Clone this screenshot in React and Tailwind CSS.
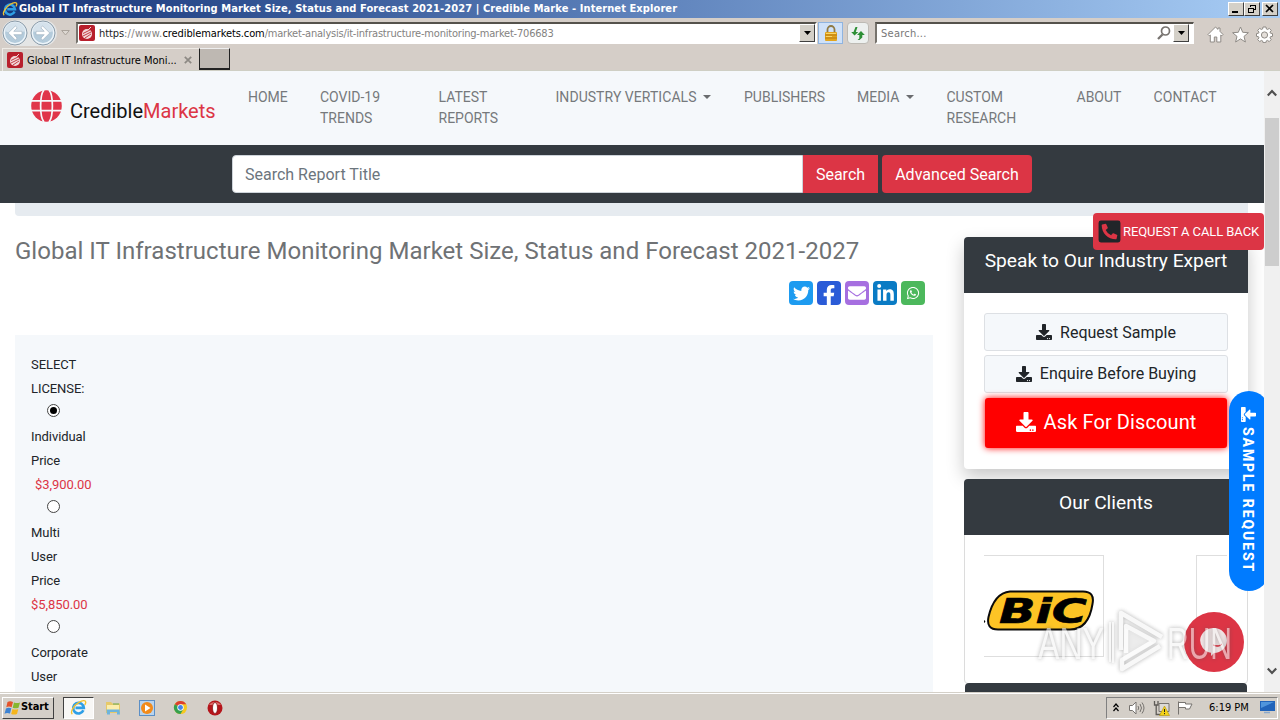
import React from 'react';
import {
  FaDownload,
  FaPhoneSquareAlt,
  FaTwitter,
  FaFacebookF,
  FaEnvelope,
  FaLinkedinIn,
  FaWhatsapp,
} from 'react-icons/fa';

const tahoma = "font-['DejaVu_Sans_Condensed','DejaVu_Sans',sans-serif]";

function IeLogo({ className }) {
  return (
    <svg viewBox="0 0 16 16" className={className} fill="none">
      <path d="M12.6 10.6A5 5 0 1 1 13 8.3H5.2" stroke="#2f9fe6" strokeWidth="2.5" />
      <path d="M2.2 14.2C-.2 12.4 3.6 6 8.4 3.2c3.4-2 6.2-2.2 6.4-.4.1.8-.3 1.8-.9 2.7" stroke="#f2c230" strokeWidth="1.3" />
    </svg>
  );
}

function Favicon() {
  return (
    <svg viewBox="0 0 16 16" className="size-4 shrink-0">
      <rect width="16" height="16" rx="2" fill="#b81f2c" />
      <circle cx="8" cy="9" r="5" fill="#f3d9da" />
      <path d="M4 8.5 11 5M4 11l8-4M6 13l6-4" stroke="#c23a44" strokeWidth="1" />
      <path d="m9 5 3-3" stroke="#f3d9da" />
    </svg>
  );
}

function GlobeMark() {
  return (
    <svg viewBox="0 0 31 32" className="h-8 w-[31px]" fill="none">
      <ellipse cx="15.500" cy="16" rx="15.300" ry="15.800" fill="#e0354a" />
      <g stroke="#f5f8fb" strokeWidth="1.700">
        <path d="M0 10.800h31M0 20.600h31" />
        <path d="M13 0C8.500 5 8.500 27 13 32M18 0c4.500 5 4.500 27 0 32" />
      </g>
    </svg>
  );
}

function RoundArrow({ flip }) {
  return (
    <svg viewBox="0 0 26 26" className={flip ? 'size-[26px] -scale-x-100' : 'size-[26px]'}>
      <circle cx="13" cy="13" r="12" fill="#b4cbdb" stroke="#8c9ba8" />
      <circle cx="13" cy="13" r="10.6" fill="none" stroke="#eef5fa" strokeWidth="1.3" />
      <path d="M3 11a10 9 0 0 1 20 0q-10 5-20 0Z" fill="#d5e2ec" />
      <path d="M20 11.3h-8.2l3.4-3.5-1.9-1.8L6.2 13l7.1 7 1.9-1.8-3.4-3.5H20Z" fill="#fff" stroke="#a3b5c3" strokeWidth=".7" />
    </svg>
  );
}

function DropButton({ className }) {
  return (
    <div className={`flex items-center justify-center border border-r-[#404040] border-b-[#404040] border-t-white border-l-white bg-[#d4d0c8] ${className}`}>
      <svg viewBox="0 0 7 4" className="h-1 w-[7px]"><path d="M0 0h7L3.5 4Z" fill="#000" /></svg>
    </div>
  );
}

function WindowButton({ children }) {
  return (
    <div className="flex h-[14px] w-4 items-center justify-center border border-t-white border-l-white border-r-[#404040] border-b-[#404040] bg-[#d4d0c8]">
      <svg viewBox="0 0 12 10" className="h-[10px] w-3" fill="none" stroke="#000" shapeRendering="crispEdges">{children}</svg>
    </div>
  );
}

function TitleBar() {
  return (
    <div className="flex h-[18px] shrink-0 items-center bg-linear-to-r from-[#173479] via-[#5e82bb] to-[#a8cdf5] pl-[2px] pr-[2px]">
      <IeLogo className="size-4" />
      <div className={`ml-[1px] w-[1000px] whitespace-nowrap pt-px text-[11px] font-bold tracking-[0.088px] text-white ${tahoma}`}>
        Global IT Infrastructure Monitoring Market Size, Status and Forecast 2021-2027 | Credible Marke - Internet Explorer
      </div>
      <div className="ml-auto flex">
        <WindowButton><path d="M2 8h6" strokeWidth="2" /></WindowButton>
        <WindowButton>
          <path d="M4.5 3V1.5h5v4H8M4 1h6" />
          <path d="M2.5 4v4.5h5V4.500h-5M2 4h6" />
        </WindowButton>
        <div className="ml-[2px]">
          <WindowButton><path d="m2 1 7 7M9 1 2 8" strokeWidth="1.7" shapeRendering="auto" /></WindowButton>
        </div>
      </div>
    </div>
  );
}

function AddressBar() {
  return (
    <div className={`flex h-[29px] shrink-0 items-center text-[11px] ${tahoma}`}>
      <div className="ml-[2px] flex h-[26px] w-[55px] items-center gap-[2px] rounded-full bg-[#e4e5e5]">
        <RoundArrow />
        <RoundArrow flip />
      </div>
      <svg viewBox="0 0 9 6" className="ml-1 h-[6px] w-[9px]"><path d="M.7.5h7.600L4.500 5Z" fill="#ddd8d2" stroke="#aaa39b" /></svg>
      <div className="ml-[6px] mt-px flex h-[22px] w-[741px] items-center border-2 border-t-[#55524c] border-l-[#77736d] border-r-white border-b-white bg-white pl-[1px]">
        <Favicon />
        <div className="ml-1 mt-[2px] whitespace-nowrap text-[#84827f]">
          <span className="tracking-[-0.1px] text-[#222]">https</span><span className="tracking-[0.3px]">://www.</span><span className="text-black tracking-[-0.1px]">crediblemarkets.com</span><span className="tracking-[-0.200px]">/market-analysis/it-infrastructure-monitoring-market-706683</span>
        </div>
        <DropButton className="ml-auto h-[18px] w-4" />
      </div>
      <div className="ml-px mt-px flex h-[22px] w-[25px] items-center justify-center border border-[#8fb4e0] bg-[#cfe1f8]">
        <svg viewBox="0 0 14 16" className="h-4 w-[14px]">
          <path d="M3.500 7V4.500a3.500 3.500 0 0 1 7 0V7" fill="none" stroke="#8f7a45" strokeWidth="1.800" />
          <rect x="1" y="7" width="12" height="9" rx="1" fill="#e3a51c" />
          <path d="M1 10h12M1 13h12" stroke="#b97a10" />
          <path d="M2 8.500h10M2 11.500h6" stroke="#f9d668" />
        </svg>
      </div>
      <div className="ml-1 mt-px flex h-[22px] w-[22px] items-center justify-center rounded-sm border border-[#bdbab4] bg-[#edf0ef]">
        <svg viewBox="0 0 14 13" className="h-[13px] w-[14px]" fill="#2d8f35">
          <path d="M4.500 0h2L4.800 5h2.500L3.500 8.500.2 5h2.300Z" />
          <path d="M8.500 13h-2l1.800-1.500V8H6l4-4 3.800 4h-2.500v2.500Z" />
        </svg>
      </div>
      <div className="ml-[6px] mt-px flex h-[22px] w-[319px] items-center border-2 border-r border-t-[#55524c] border-l-[#77736d] border-r-white border-b-white bg-white pl-1 text-[#777]">
        <span className="mt-[2px] tracking-[0.25px]">Search...</span>
        <svg viewBox="0 0 14 14" className="ml-auto size-[14px]" fill="none" stroke="#77736f"><circle cx="8.500" cy="5" r="4" strokeWidth="1.700" /><path d="M5.500 8.500 1 13" strokeWidth="2.300" /></svg>
        <DropButton className="ml-[2px] mr-[4px] h-[18px] w-4" />
      </div>
      <div className="ml-[13px] mt-[4px] flex gap-[7.500px]">
        <svg viewBox="0 0 17 17" className="size-[17px]" fill="#fff" stroke="#8f8b86"><path d="M1 8.500 8.500 1l2.500 2.400V2h2v3.400L16 8.500 14.800 9.800l-1-.8v7h-4v-5H7.300v5h-4V9l-1 .8Z" /></svg>
        <svg viewBox="0 0 17 17" className="size-[17px]" fill="#fff" stroke="#8f8b86"><path d="m8.500 1 2.200 5.300 5.700.4L12 10.400l1.400 5.600-4.900-3.100L3.600 16 5 10.400.6 6.700l5.700-.4Z" /></svg>
        <svg viewBox="0 0 17 17" className="size-[17px]" fill="#fff" stroke="#8f8b86">
          <path d="M7 1h3l.4 2 1.200.500L13.300 2.400l2 2L14 6.100l.5 1.100 2 .4v2.700l-2 .4-.5 1.200 1.200 1.700-2 2-1.700-1.200-1.200.5-.4 1.700H7l-.4-1.700-1.200-.5-1.700 1.200-2-2L3 11.900l-.5-1.200-2-.4V7.600l2-.4L3 6.100 1.700 4.400l2-2 1.700 1.100L6.600 3Z" />
          <circle cx="8.500" cy="9" r="3.100" fill="#e4dfda" />
        </svg>
      </div>
    </div>
  );
}

function TabRow() {
  return (
    <div className={`flex h-6 shrink-0 items-start border-b border-[#cfcfc4] text-[11px] ${tahoma}`}>
      <div className="ml-[2px] mt-px flex h-[23px] w-[197px] items-center border-l border-t border-[#eeebe6] pl-1">
        <Favicon />
        <span className="ml-[4px] mt-[2px] whitespace-nowrap tracking-[-0.03px] text-black">Global IT Infrastructure Moni...</span>
        <svg viewBox="0 0 8 8" className="ml-[7px] size-2"><path d="m.800.800 6.400 6.400m0-6.400L.8 7.200" stroke="#8d8984" strokeWidth="1.700" /></svg>
      </div>
      <div className="mt-px h-[22px] w-[31px] border border-b-2 border-t-[#eee] border-l-[#222] border-r-[#222] border-b-[#222] bg-[#beb8b2]" />
    </div>
  );
}

function Caret() {
  return <span className="ml-[6.500px] inline-block border-x-[4.500px] border-t-[4.500px] border-x-transparent border-t-[#6a6c6f] align-[3px]" />;
}

const navItems = [
  { label: 'HOME', box: 'w-[72px]' },
  { label: 'COVID-19\nTRENDS', box: 'w-[118.5px]' },
  { label: 'LATEST\nREPORTS', box: 'w-[117px]' },
  { label: 'INDUSTRY VERTICALS', box: 'w-[188.500px] tracking-[0.05px]', caret: true },
  { label: 'PUBLISHERS', box: 'w-[113px]' },
  { label: 'MEDIA', box: 'w-[89.500px]', caret: true },
  { label: 'CUSTOM\nRESEARCH', box: 'w-[130px]' },
  { label: 'ABOUT', box: 'w-[77px]' },
  { label: 'CONTACT', box: 'w-[80px] tracking-[0.08px]' },
];

function SiteNav() {
  return (
    <div className="flex h-[74px] shrink-0 bg-[#f5f8fb]">
      <div className="flex w-[248px] shrink-0 pl-[31px] pt-[19px]">
        <GlobeMark />
        <div className="ml-2 mt-[6px] whitespace-nowrap text-[20px] leading-[30px] text-[#111]">
          Credible<span className="text-[#dc3545]">Markets</span>
        </div>
      </div>
      {navItems.map((item) => (
        <div key={item.label} className={`shrink-0 whitespace-pre pt-[16px] text-[14px] leading-[21px] text-[#76797c] ${item.box}`}>
          {item.label}
          {item.caret && <Caret />}
        </div>
      ))}
    </div>
  );
}

function SearchStrip() {
  return (
    <div className="flex h-[58px] shrink-0 items-center bg-[#343a40] pl-[232px] text-[16px] text-white">
      <div className="flex h-[38px] w-[571px] items-center rounded-l border border-[#ced4da] bg-white pl-3 pt-[2px] text-[#6c757d]">Search Report Title</div>
      <div className="flex h-[38px] w-[75px] items-center justify-center bg-[#dc3545] pt-[2px]">Search</div>
      <div className="ml-1 flex h-[38px] w-[150px] items-center justify-center rounded bg-[#dc3545] pt-[2px]">Advanced Search</div>
    </div>
  );
}

function Radio({ checked }) {
  return (
    <div className="flex h-6 items-center pl-4 pb-[5px]">
      <div className="flex size-[13px] items-center justify-center rounded-full border border-[#444] bg-white">
        {checked && <div className="size-[7px] rounded-full bg-black" />}
      </div>
    </div>
  );
}

const social = [
  { Icon: FaTwitter, box: 'bg-[#1d9bf0]', icon: 'size-[17px]' },
  { Icon: FaFacebookF, box: 'bg-[#2a5bd7]', icon: 'size-[20px] mt-[3px]' },
  { Icon: FaEnvelope, box: 'bg-[#a66fe0]', icon: 'size-[18px]' },
  { Icon: FaLinkedinIn, box: 'bg-[#0a7bc4]', icon: 'size-[19px]' },
  { Icon: FaWhatsapp, box: 'bg-[#4cb85c]', icon: 'size-[14px]' },
];

function ReportColumn() {
  return (
    <div className="flex w-[918px] shrink-0 flex-col">
      <h1 className="mt-[21px] whitespace-nowrap text-[24px] leading-[29px] tracking-[0.024px] text-[#6f7275]">
        Global IT Infrastructure Monitoring Market Size, Status and Forecast 2021-2027
      </h1>
      <div className="mt-[15px] flex justify-end gap-1 pr-2">
        {social.map(({ Icon, box, icon }, i) => (
          <div key={i} className={`flex size-6 items-center justify-center rounded-[4px] text-white ${box}`}>
            <Icon className={icon} />
          </div>
        ))}
      </div>
      <div className="mt-[30px] h-[400px] bg-[#f5f8fb] px-4 pt-[18px] text-[13px] leading-6 tracking-[-0.07px] text-[#212529]">
        <div>SELECT</div>
        <div>LICENSE:</div>
        <Radio checked />
        <div>Individual</div>
        <div>Price</div>
        <div className="pl-1 text-[#dc3545]">$3,900.00</div>
        <Radio />
        <div>Multi</div>
        <div>User</div>
        <div>Price</div>
        <div className="text-[#dc3545]">$5,850.00</div>
        <Radio />
        <div>Corporate</div>
        <div>User</div>
      </div>
    </div>
  );
}

function BicLogo() {
  return (
    <svg viewBox="0 0 110 42" className="h-[42px] w-[110px]">
      <path d="M26 1.500H99Q111 1.500 108.500 14 104.500 39.500 86 39.500H14Q2 39.500 4.500 27 10 3 26 1.500Z" fill="#fdc425" stroke="#0b0b0b" strokeWidth="2" />
      <text x="15" y="33" fontSize="34" textLength="88" lengthAdjust="spacingAndGlyphs" stroke="#000" strokeWidth=".6" className="font-['DejaVu_Sans',sans-serif] font-bold italic">BiC</text>
      <circle cx="0" cy="31.500" r="1.200" />
    </svg>
  );
}

function Sidebar() {
  return (
    <div className="mt-[21px] flex w-[284px] shrink-0 flex-col gap-[10px] text-[#212529]">
      <div className="h-[232px] rounded bg-white shadow-[0_8px_18px_rgba(0,0,0,0.22)]">
        <div className="h-14 rounded-t bg-[#343a40] pt-[12px] text-center text-[19.200px] leading-6 text-white">Speak to Our Industry Expert</div>
        <div className="flex flex-col gap-1 px-5 pt-5 text-[16px]">
          <div className="flex h-[38px] items-center justify-center gap-2 rounded-[3px] border border-[#dde0e4] bg-[#f5f8fb]"><FaDownload className="size-4" /><span className="pt-[2px]">Request Sample</span></div>
          <div className="flex h-[38px] items-center justify-center gap-2 rounded-[3px] border border-[#dde0e4] bg-[#f5f8fb]"><FaDownload className="-mt-px size-4" /><span>Enquire Before Buying</span></div>
          <div className="mx-px mt-px flex h-[50px] items-center justify-center gap-2 rounded-[3px] bg-[#ff0000] text-[20px] tracking-[0.1px] text-white shadow-[0_0_7px_#ff0000]"><FaDownload className="-mt-[2px] size-5" /><span className="-mt-[3px]">Ask For Discount</span></div>
        </div>
      </div>
      <div className="h-[205px] rounded border border-[#dcdcdc] bg-white">
        <div className="-mx-px -mt-px h-14 rounded-t bg-[#343a40] pt-[12px] text-center text-[19.200px] leading-6 text-white">Our Clients</div>
        <div className="flex justify-between overflow-hidden pl-[19px] pt-5">
          <div className="flex h-[102px] w-[120px] items-center border border-l-0 border-[#dedede] pt-[10px]"><BicLogo /></div>
          <div className="mr-5 h-[102px] w-[31px] border border-r-0 border-[#dedede]" />
        </div>
        <div className="mt-[26px] h-5 rounded-t bg-[#343a40]" />
      </div>
    </div>
  );
}

function Overlays() {
  return (
    <>
      <div className="absolute right-0 top-[142px] flex h-[37px] w-[171px] items-center rounded bg-[#dc3545] pl-1 text-[13px] text-white">
        <FaPhoneSquareAlt className="size-[25px] text-[#212529]" />
        <span className="ml-[1px] whitespace-nowrap tracking-[-0.08px]">REQUEST A CALL BACK</span>
      </div>
      <div className="absolute left-[1229px] top-[320px] flex h-[200px] w-10 justify-start rounded-[20px] bg-[#007bff] text-white">
        <div className="flex w-[38px] flex-col items-center pt-[16px]">
          <FaDownload className="size-[15px] rotate-90" />
          <span className="mt-[5px] whitespace-nowrap text-[14px] font-extrabold leading-5 tracking-[1.900px] [writing-mode:vertical-rl]">SAMPLE REQUEST</span>
        </div>
      </div>
      <div className="absolute left-[1184px] top-[541px] flex size-[60px] items-center justify-center rounded-full bg-[#dc3545]">
        <svg viewBox="0 0 28 30" className="h-[30px] w-7"><path d="M14 1a13 12.500 0 0 1 0 25l-3 3v-3.200A13 12.500 0 0 1 14 1Z" fill="#f3e5e6" /><path d="M13 18q6 2 9-1-3 4-9 1Z" fill="#dc3545" stroke="#dc3545" /></svg>
      </div>
      <div className="absolute left-[1034px] top-[537px] opacity-60 drop-shadow-[0_0_2px_rgba(80,80,80,0.75)]">
        <svg viewBox="0 0 220 68" className="h-[68px] w-[220px]">
          <g fill="#f4f4f4" className="font-['Liberation_Sans_Narrow','Liberation_Sans',sans-serif]">
            <text x="4" y="51" fontSize="45" textLength="66" lengthAdjust="spacingAndGlyphs">ANY</text>
            <text x="133" y="51" fontSize="45" textLength="65" lengthAdjust="spacingAndGlyphs">RUN</text>
          </g>
          <g fill="none" stroke="#f4f4f4" strokeWidth="4.500" strokeLinejoin="round">
            <path d="M92 45V18l28 15-32 19v9l38-23" />
            <path d="M87 42V5l41 24" />
            <path d="M79 14v41M76 14v40" strokeWidth="2" />
          </g>
          <path d="m91 20 29 15-31 18Z" fill="#fff" fillOpacity=".55" />
        </svg>
      </div>
    </>
  );
}

function Scrollbar() {
  return (
    <div className="flex w-4 shrink-0 flex-col items-center bg-[#f0f0f0]">
      <svg viewBox="0 0 10 8" className="mt-[18px] h-2 w-[10px]" fill="none"><path d="m.800 6.500 4.200-4.500 4.200 4.500" stroke="#505050" strokeWidth="2.200" /></svg>
      <div className="mt-[21px] h-[148px] w-[14px] bg-[#cdcdcd]" />
      <svg viewBox="0 0 10 8" className="mb-[17px] mt-auto h-2 w-[10px]" fill="none"><path d="M.8 1.500 5 6l4.200-4.500" stroke="#505050" strokeWidth="2.200" /></svg>
    </div>
  );
}

function Taskbar() {
  return (
    <div className={`flex h-7 shrink-0 items-center border-t border-[#d4d0c8] bg-[#d4cfc8] shadow-[inset_0_1px_0_#fff] ${tahoma}`}>
      <div className="ml-[2px] mt-[2px] flex h-[22px] w-[52px] items-center border border-t-white border-l-white border-r-[#404040] border-b-[#404040]">
        <svg viewBox="0 0 17 16" className="ml-px h-4 w-[17px] shrink-0">
          <path d="M3.500 2Q6 .5 9 2L7.600 7.200Q4.800 6 2.300 7.300Z" fill="#e4532a" />
          <path d="M10 2.500q3 1 6 0l-1.500 5.200q-3 1.200-5.800 0Z" fill="#86b62e" />
          <path d="M2 8.500q2.500-1.300 5.300-.2L6 13.500q-3-1.300-5.500.2Z" fill="#3d83d3" />
          <path d="M8.500 8.900q3 1.200 5.800 0L13 14q-3 1.200-5.800 0Z" fill="#f5b61d" />
        </svg>
        <span className="text-[11px] font-bold tracking-[-0.1px] text-black">Start</span>
      </div>
      <div className="ml-[9px] mt-[2px] flex h-[22px] w-[31px] items-center justify-center border border-t-[#404040] border-l-[#404040] border-r-white border-b-white bg-[#f8f7f5]">
        <IeLogo className="size-[17px]" />
      </div>
      <div className="ml-[11px] mt-[2px] flex items-center gap-[18px]">
        <svg viewBox="0 0 16 16" className="size-4">
          <path d="M1 2h5l1.500 1.500H15V13H1Z" fill="#e6c969" /><path d="M2 5h12v5H2Z" fill="#fbedac" />
          <path d="M1.500 9.500h13l.5 5h-3V12H5v2.500H2Z" fill="#6db4dc" /><path d="M8 4h6" stroke="#68ac5b" />
        </svg>
        <svg viewBox="0 0 16 16" className="size-4">
          <rect x=".5" y=".5" width="15" height="15" fill="#b9d4ee" stroke="#5b8fc6" /><circle cx="8" cy="8" r="6" fill="#f28b1b" /><path d="M6 4.500v7l5.500-3.500Z" fill="#fff" />
        </svg>
        <svg viewBox="0 0 16 16" className="size-[15px]">
          <circle cx="8" cy="8" r="7" fill="#f6c91f" /><path d="M8 8 1.900 4.500A7 7 0 0 1 14.100 4.500H8Z" fill="#dc3e2f" /><path d="M8 8 1.900 4.500A7 7 0 0 0 8 15l3-5.200Z" fill="#35a04f" />
          <circle cx="8" cy="8" r="3.400" fill="#fff" /><circle cx="8" cy="8" r="2.600" fill="#4285e8" />
        </svg>
        <svg viewBox="0 0 16 16" className="ml-px size-4"><circle cx="8" cy="8" r="7.500" fill="#b5151b" /><path d="M2 5a7 6 0 0 1 12 0Z" fill="#dc6a68" /><ellipse cx="8" cy="8" rx="2.500" ry="5.500" fill="#fff" stroke="#7c080d" strokeWidth=".7" /></svg>
      </div>
      <div className="ml-auto mr-[2px] mt-[2px] flex h-[22px] w-[172px] items-center border border-t-[#808080] border-l-[#808080] border-r-white border-b-white">
        <svg viewBox="0 0 6 9" className="ml-[6px] h-[9px] w-[6px]" fill="none" stroke="#000" strokeWidth="1.200"><path d="m.5 4 2.500-3 2.500 3M.5 8 3 5l2.500 3" /></svg>
        <svg viewBox="0 0 16 14" className="ml-[10px] h-[14px] w-4" fill="#fff" stroke="#76736f"><path d="M.5 4.500h3L7 1v12L3.500 9.500h-3Z" /><path d="M9 5q1.500 2 0 4M11 3q3 4 0 8M13 1.500q4 5.500 0 11" fill="none" /></svg>
        <svg viewBox="0 0 17 16" className="ml-2 h-4 w-[17px]">
          <path d="M6 3.500h10v8H6Z" fill="#dcdad6" stroke="#77736f" /><path d="M1.500 1v4h3.500V1M3.200 5v9.500H11" fill="none" stroke="#5f5c58" strokeWidth="1.300" />
          <path d="m11.500 6 5 9.500H6.500Z" fill="#f4d319" stroke="#b49309" strokeWidth=".6" /><path d="M11.500 9v3m0 1v1.200" stroke="#222" />
        </svg>
        <svg viewBox="0 0 16 14" className="ml-[7px] h-[14px] w-4" fill="#fff" stroke="#76736f"><path d="M1.500 13.500V.5M1.500 1.500h7v1.500h6.500l-2.500 5h-4V6.500h-7" /></svg>
        <span className="ml-[16px] mt-px whitespace-nowrap text-[11px] text-black">6:19 PM</span>
        <svg viewBox="0 0 15 13" className="ml-auto mr-[2px] h-[13px] w-[15px]"><rect width="15" height="10" fill="#2264ba" /><path d="M1 1h13L1 7Z" fill="#5095dc" /><path d="M4 11.500h6" stroke="#8ba8cc" strokeWidth="1.500" /></svg>
      </div>
    </div>
  );
}

export default function App() {
  return (
    <div className="flex h-[720px] w-[1280px] flex-col overflow-hidden bg-[#d5cec8]">
      <TitleBar />
      <AddressBar />
      <TabRow />
      <div className="flex h-[621px] shrink-0">
        <div className="relative flex w-[1264px] shrink-0 flex-col overflow-hidden bg-white font-[Roboto,sans-serif]">
          <SiteNav />
          <SearchStrip />
          <div className="ml-[15px] h-[13px] w-[1233px] shrink-0 rounded-b bg-[#e6ebf0]" />
          <div className="flex gap-[31px] pl-[15px]">
            <ReportColumn />
            <Sidebar />
          </div>
          <Overlays />
        </div>
        <Scrollbar />
      </div>
      <Taskbar />
    </div>
  );
}
